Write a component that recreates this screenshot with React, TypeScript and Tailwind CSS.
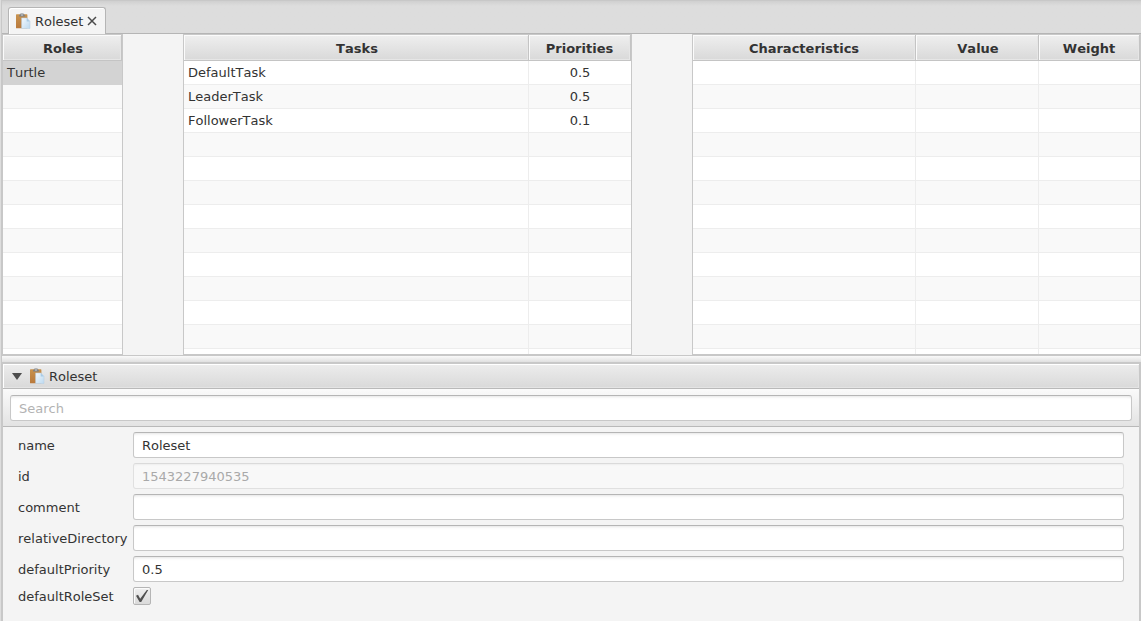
import React from "react";

type Column = { title: string; width: string; center?: boolean; nudge?: boolean };

function ClipboardIcon() {
  return (
    <svg width="16" height="16" viewBox="0 0 16 16" className="block shrink-0">
      <defs>
        <linearGradient id="board" x1="0" y1="0" x2="0" y2="1">
          <stop offset="0" stopColor="#c8934f" />
          <stop offset="1" stopColor="#b9793c" />
        </linearGradient>
        <linearGradient id="sheet" x1="0" y1="0" x2="1" y2="1">
          <stop offset="0" stopColor="#f4f9fe" />
          <stop offset="1" stopColor="#bcd9f0" />
        </linearGradient>
      </defs>
      <rect x="1" y="1.3" width="11.4" height="14" rx="0.6" fill="url(#board)" />
      <path d="M4.2 3.4V1.8h1.2V0.6h3.2V1.8h1.2v1.6z" fill="#7b8086" />
      <rect x="5.9" y="1.5" width="2.2" height="1" fill="#d5d8da" />
      <path d="M6.6 4.9h5.2l3.2 3.4v7.2H6.6z" fill="url(#sheet)" stroke="#b7cfe2" strokeWidth="0.5" />
      <path d="M11.7 4.9v3.5H15z" fill="#a9cbe6" />
    </svg>
  );
}

function Table({
  columns,
  rows,
  className,
  selected,
}: {
  columns: Column[];
  rows: string[][];
  className: string;
  selected?: number;
}) {
  const lines = Array.from({ length: 13 }, (_, i) => i);
  return (
    <div
      className={`flex h-[321px] shrink-0 flex-col overflow-hidden border border-[#c8c8c8] bg-white ${className}`}
    >
      <div className="flex h-[26px] shrink-0">
        {columns.map((c) => (
          <div
            key={c.title}
            className={`flex h-[26px] shrink-0 items-center justify-center border-r border-b border-[#c4c4c4] bg-linear-to-b from-[#efefef] to-[#d9d9d9] pt-0.5 font-bold shadow-[inset_1px_1px_0_#fbfbfb,inset_-1px_-1px_0_#e6e6e6] ${c.nudge ? "pl-0.5" : ""} ${c.width}`}
          >
            {c.title}
          </div>
        ))}
      </div>
      {lines.map((i) => (
        <div
          key={i}
          className={`flex h-6 shrink-0 ${
            selected === i ? "bg-[#d3d3d3]" : i % 2 ? "bg-[#f9f9f9]" : "bg-white"
          }`}
        >
          {columns.map((c, k) => (
            <div
              key={c.title}
              className={`flex h-6 shrink-0 items-center border-b px-1 ${
                selected === i ? "border-[#d3d3d3]" : "border-[#ededed]"
              } ${k < columns.length - 1 ? "border-r" : ""} ${c.center ? "justify-center" : ""} ${c.width}`}
            >
              {rows[i]?.[k]}
            </div>
          ))}
        </div>
      ))}
    </div>
  );
}

function Field({ label, value, disabled }: { label: string; value?: string; disabled?: boolean }) {
  return (
    <div className="flex h-[26px] items-center">
      <div className="w-[115px] shrink-0 pt-0.5">{label}</div>
      <div
        className={`flex h-[26px] w-[991px] items-center rounded-[3px] border px-2 pt-0.5 ${
          disabled
            ? "border-[#e0e0e0] border-t-[#dadada] bg-[#f8f8f8] text-[#a9a9a9] shadow-[inset_0_2px_2px_-1px_#eeeeee]"
            : "border-[#c8c8c8] border-t-[#b5b5b5] bg-white shadow-[inset_0_3px_3px_-2px_#e4e4e4]"
        }`}
      >
        {value}
      </div>
    </div>
  );
}

export default function App() {
  return (
    <div className="flex h-[621px] w-[1141px] overflow-hidden bg-[#f4f4f4] font-['DejaVu_Sans','Liberation_Sans',sans-serif] text-[13px] leading-4 text-[#333333] [font-kerning:none]">
      <div className="w-px shrink-0 bg-[#dddddd]" />
      <div className="w-px shrink-0 bg-[#c8c8c8]" />
      <div className="flex w-[1139px] shrink-0 flex-col">
        <div className="flex h-[34px] shrink-0 items-end border-t border-[#c8c8c8] bg-linear-to-b from-[#d0d0d0] to-[#dddddd] to-[5px] shadow-[inset_0_-1px_0_#b5b5b5]">
          <div className="ml-[6px] flex h-[27px] w-[98px] items-center rounded-t-[3px] border border-b-0 border-[#b5b5b5] bg-[#f4f4f4] pl-[6px] shadow-[inset_1px_1px_0_#ffffff]">
            <ClipboardIcon />
            <span className="ml-1 pt-0.5">Roleset</span>
            <svg width="10" height="10" viewBox="0 0 10 10" className="ml-[4px] shrink-0">
              <path d="M1 1L9 9M9 1L1 9" stroke="#4a4a4a" strokeWidth="1.5" />
            </svg>
          </div>
        </div>

        <div className="flex h-[321px] shrink-0">
          <Table
            className="w-[121px]"
            selected={0}
            columns={[{ title: "Roles", width: "w-[119px]", nudge: true }]}
            rows={[["Turtle"]]}
          />
          <Table
            className="ml-[60px] w-[449px]"
            columns={[
              { title: "Tasks", width: "w-[345px]", nudge: true },
              { title: "Priorities", width: "w-[102px]", center: true },
            ]}
            rows={[
              ["DefaultTask", "0.5"],
              ["LeaderTask", "0.5"],
              ["FollowerTask", "0.1"],
            ]}
          />
          <Table
            className="ml-[60px] w-[449px]"
            columns={[
              { title: "Characteristics", width: "w-[223px]" },
              { title: "Value", width: "w-[123px]", nudge: true },
              { title: "Weight", width: "w-[101px]" },
            ]}
            rows={[]}
          />
        </div>

        <div className="h-[9px] shrink-0 border-t border-b-2 border-[#c8c8c8] bg-linear-to-b from-[#fafafa] to-[#e0e0e0]" />

        <div className="flex grow flex-col border-l border-r-2 border-[#c8c8c8]">
          <div className="flex h-[25px] shrink-0 items-center border-b border-[#b9b9b9] bg-linear-to-b from-[#ededed] to-[#d9d9d9] pl-[9px] shadow-[inset_1px_1px_0_#ffffff,inset_-1px_-1px_0_#e4e4e4]">
            <svg width="10" height="7" viewBox="0 0 10 7" className="shrink-0">
              <path d="M0 0H10L5 7Z" fill="#4d4d4d" />
            </svg>
            <span className="ml-[7px]">
              <ClipboardIcon />
            </span>
            <span className="ml-1 pt-0.5">Roleset</span>
          </div>
          <div className="flex h-[38px] shrink-0 border-b border-[#b9b9b9] bg-linear-to-b from-[#fafafa] to-[#e3e3e3] pt-[6px] pl-[7px]">
            <div className="flex h-[26px] w-[1122px] items-center rounded-[3px] border border-[#c8c8c8] border-t-[#b5b5b5] bg-white px-2 pt-0.5 text-[#b3b3b3] shadow-[inset_0_3px_3px_-2px_#e4e4e4]">
              Search
            </div>
          </div>
          <div className="flex grow flex-col gap-[5px] pt-[5px] pl-[15px]">
            <Field label="name" value="Roleset" />
            <Field label="id" value="1543227940535" disabled />
            <Field label="comment" />
            <Field label="relativeDirectory" />
            <Field label="defaultPriority" value="0.5" />
            <div className="flex h-[18px] items-center">
              <div className="w-[115px] shrink-0 pt-0.5">defaultRoleSet</div>
              <div className="flex size-[18px] items-center justify-center rounded-[2px] border border-[#b5b5b5] bg-linear-to-b from-[#f0f0f0] to-[#dadada] shadow-[inset_1px_1px_0_#fbfbfb]">
                <svg width="14" height="14" viewBox="0 0 14 14">
                  <path d="M1 6.8L3 5.8L5.2 9.8L11.8 1L13.2 1L6.2 13H4.6Z" fill="#505050" />
                </svg>
              </div>
            </div>
          </div>
        </div>
      </div>
    </div>
  );
}
